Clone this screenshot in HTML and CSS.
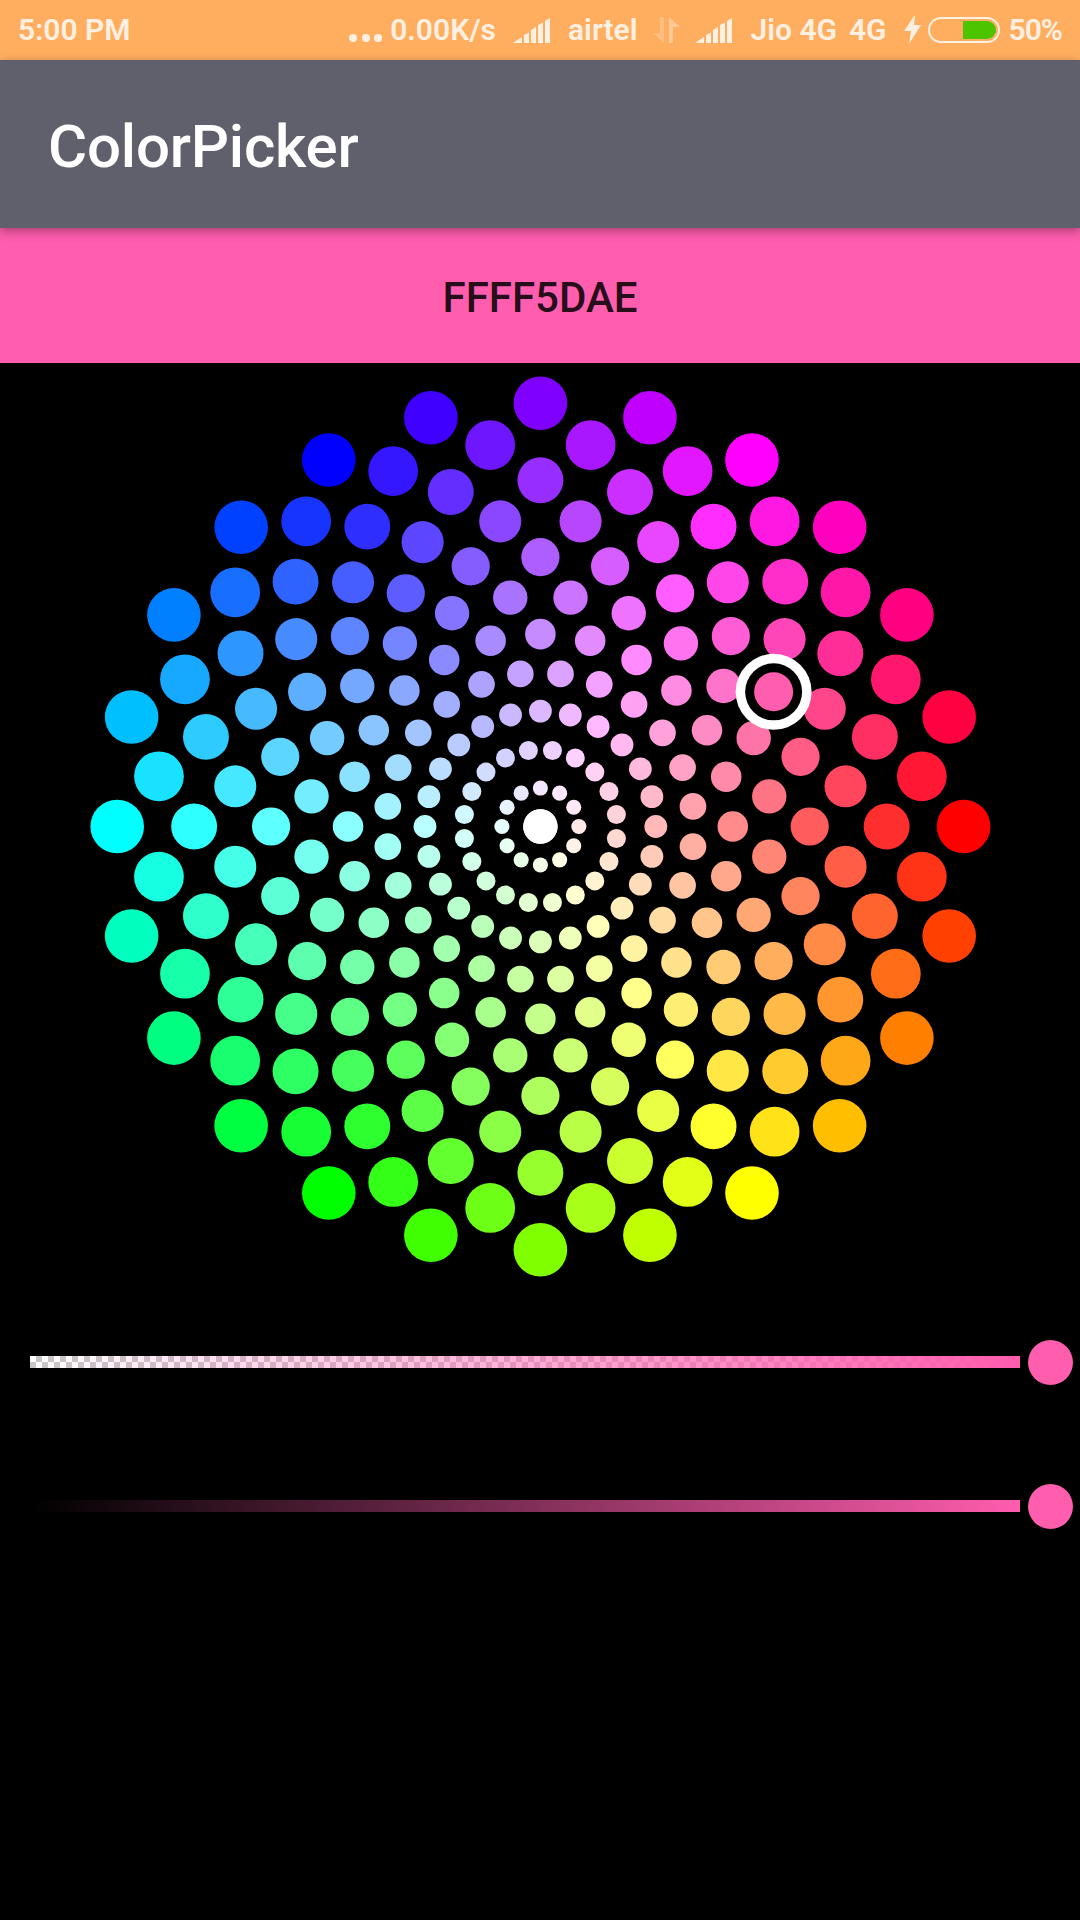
FILE: index.html
```html
<!DOCTYPE html>
<html lang="en">
<head>
  <meta charset="UTF-8">
  <meta name="viewport" content="width=device-width, initial-scale=1.0">
  <title>ColorPicker</title>
  <link rel="stylesheet" href="styles.css">
</head>
<body>
  <div class="status-bar">
    <span class="status-text">5:00 PM</span>
    <div class="status-right">
      <svg class="status-dots" width="33" height="10" viewBox="0 0 33 10"><circle cx="4" cy="5" r="4"/><circle cx="17" cy="5" r="4"/><circle cx="29" cy="5" r="4"/></svg>
      <span class="status-text speed">0.00K/s</span>
      <svg class="signal first" width="37" height="25" viewBox="0 0 37 25"><path d="M0 25L9 19V25ZM11 25V17L16 14.5V25ZM18 25V12L23 9V25ZM25 25V7L30 4.5V25ZM32 25V3L37 0V25Z"/></svg>
      <span class="status-text airtel">airtel</span>
      <svg class="data" width="27" height="26" viewBox="0 0 27 26"><path class="arrow-down" d="M7 0H11V26L0 16H7Z"/><path class="arrow-up" d="M16 0L27 10H20V26H16Z"/></svg>
      <svg class="signal second" width="37" height="25" viewBox="0 0 37 25"><path d="M0 25L9 19V25ZM11 25V17L16 14.5V25ZM18 25V12L23 9V25ZM25 25V7L30 4.5V25ZM32 25V3L37 0V25Z"/></svg>
      <span class="status-text jio">Jio 4G</span>
      <span class="status-text fourg">4G</span>
      <svg class="bolt" width="17" height="28" viewBox="0 0 17 28"><path d="M10 0L0 15H7L5 28L17 9H10L11 0Z"/></svg>
      <div class="battery"><div class="battery-level"></div></div>
      <span class="status-text percent">50%</span>
    </div>
  </div>

  <div class="app-bar">ColorPicker</div>
  <div class="color-band">FFFF5DAE</div>

  <svg id="wheel" class="wheel" width="928" height="927" viewBox="0 0 928 927"></svg>

  <div class="slider">
    <div class="track track-alpha"></div>
    <div class="thumb"></div>
  </div>
  <div class="slider">
    <div class="track track-light"></div>
    <div class="thumb"></div>
  </div>

  <script src="wheel.js"></script>
</body>
</html>
```

FILE: styles.css
```css
body {
  margin: 0;
  width: 1080px;
  height: 1920px;
  overflow: hidden;
  background-color: #000;
  font-family: Roboto, sans-serif;
}

/* status bar */
.status-bar {
  display: flex;
  justify-content: space-between;
  align-items: center;
  height: 60px;
  padding: 0 18px;
  box-sizing: border-box;
  background-color: #ffae60;
}
.status-right {
  display: flex;
  align-items: center;
}
.status-right svg {
  fill: #fff0e2;
}
.status-text {
  font-size: 30px;
  font-weight: 600;
  line-height: 60px;
  color: #fff0e2;
}
.status-dots { margin-top: 16px; }
.speed { margin-left: 8px; }
.signal { margin-top: 1px; }
.signal.first { margin-left: 17px; }
.airtel { margin-left: 18px; }
.data { margin-left: 16px; }
.status-right .arrow-down { opacity: 0.25; }
.status-right .arrow-up { opacity: 0.42; }
.signal.second { margin-left: 15px; }
.jio { margin-left: 18px; }
.fourg { margin-left: 12px; }
.bolt { margin-left: 17px; }
.battery {
  display: flex;
  justify-content: flex-end;
  width: 72px;
  height: 26px;
  margin-left: 7px;
  padding: 2px 2px 2px 0;
  box-sizing: border-box;
  border: 2px solid #fff0e2;
  border-radius: 13px;
}
.battery-level {
  width: 33px;
  height: 18px;
  background-color: #4cc400;
  border-radius: 0 9px 9px 0;
}
.percent {
  margin-left: 9px;
  letter-spacing: -1px;
}

/* app bar */
.app-bar {
  position: relative;
  height: 168px;
  padding-left: 48px;
  background-color: #60606c;
  box-shadow: 0 3px 10px rgba(0, 0, 0, 0.35);
  color: #fff;
  font-size: 60px;
  font-weight: 500;
  letter-spacing: -0.2px;
  line-height: 174px;
}

.color-band {
  height: 135px;
  background-color: #ff5dae;
  color: rgba(0, 0, 0, 0.87);
  font-size: 42px;
  font-weight: 500;
  line-height: 139px;
  text-align: center;
}

.wheel {
  display: block;
  margin: 0 auto;
}

/* sliders */
.slider {
  display: flex;
  align-items: center;
  gap: 7.5px;
  height: 144px;
  padding-left: 30px;
}
.track {
  width: 990px;
  height: 12px;
}
.track-alpha {
  background-image:
    linear-gradient(to right, rgba(255, 93, 174, 0), #ff5dae),
    conic-gradient(#c8c8c8 25%, #fff 0 50%, #c8c8c8 0 75%, #fff 0);
  background-size: 100% 100%, 12px 12px;
}
.track-light {
  background-image: linear-gradient(to right, #000, #ff5dae);
}
.thumb {
  width: 45px;
  height: 45px;
  border-radius: 50%;
  background-color: #ff5dae;
}
```

FILE: wheel.js
```js
// flower colour wheel: rings of dots, hue follows the angle, saturation the radius
const SVG_NS = 'http://www.w3.org/2000/svg';
const wheel = document.getElementById('wheel');

const center = { x: 464.4, y: 463.5 };
const density = 12;
const strokeWidth = 2.05;
const maxRadius = 423.2;
const cSize = maxRadius / (density - 1) / 2;
const gap = 0.025;

function hsvToCss(h, s, v) {
  const f = n => {
    const k = (n + h / 60) % 6;
    return Math.round(255 * (v - v * s * Math.max(0, Math.min(k, 4 - k, 1))));
  };
  return 'rgb(' + f(5) + ',' + f(3) + ',' + f(1) + ')';
}

function addCircle(x, y, r, fill) {
  const circle = document.createElementNS(SVG_NS, 'circle');
  circle.setAttribute('cx', x);
  circle.setAttribute('cy', y);
  circle.setAttribute('r', r);
  circle.setAttribute('fill', fill);
  wheel.appendChild(circle);
}

for (let i = 0; i < density; i++) {
  const p = i / (density - 1);
  const jitter = (i - density / 2) / density;
  const radius = maxRadius * p;
  const size = Math.max(1.5 + strokeWidth, cSize + (i === 0 ? 0 : cSize * 1.2 * jitter));
  const count = Math.max(1, Math.floor((1 - gap) * Math.PI / Math.asin(Math.min(1, size / radius)) + 0.5));
  const total = Math.min(count, density * 2);

  for (let j = 0; j < total; j++) {
    const angle = Math.PI * 2 * j / total + (Math.PI / total) * ((i + 1) % 2);
    const x = center.x + radius * Math.cos(angle);
    const y = center.y + radius * Math.sin(angle);
    const hue = (angle * 180 / Math.PI) % 360;
    addCircle(x, y, size - strokeWidth, hsvToCss(hue, p, 1));
  }
}

// selected colour marker
const selX = center.x + maxRadius * 7 / 11 * Math.cos(-Math.PI / 6);
const selY = center.y + maxRadius * 7 / 11 * Math.sin(-Math.PI / 6);
addCircle(selX, selY, 38, '#fff');
addCircle(selX, selY, 28.5, '#000');
addCircle(selX, selY, 19.5, '#ff5dae');
```
